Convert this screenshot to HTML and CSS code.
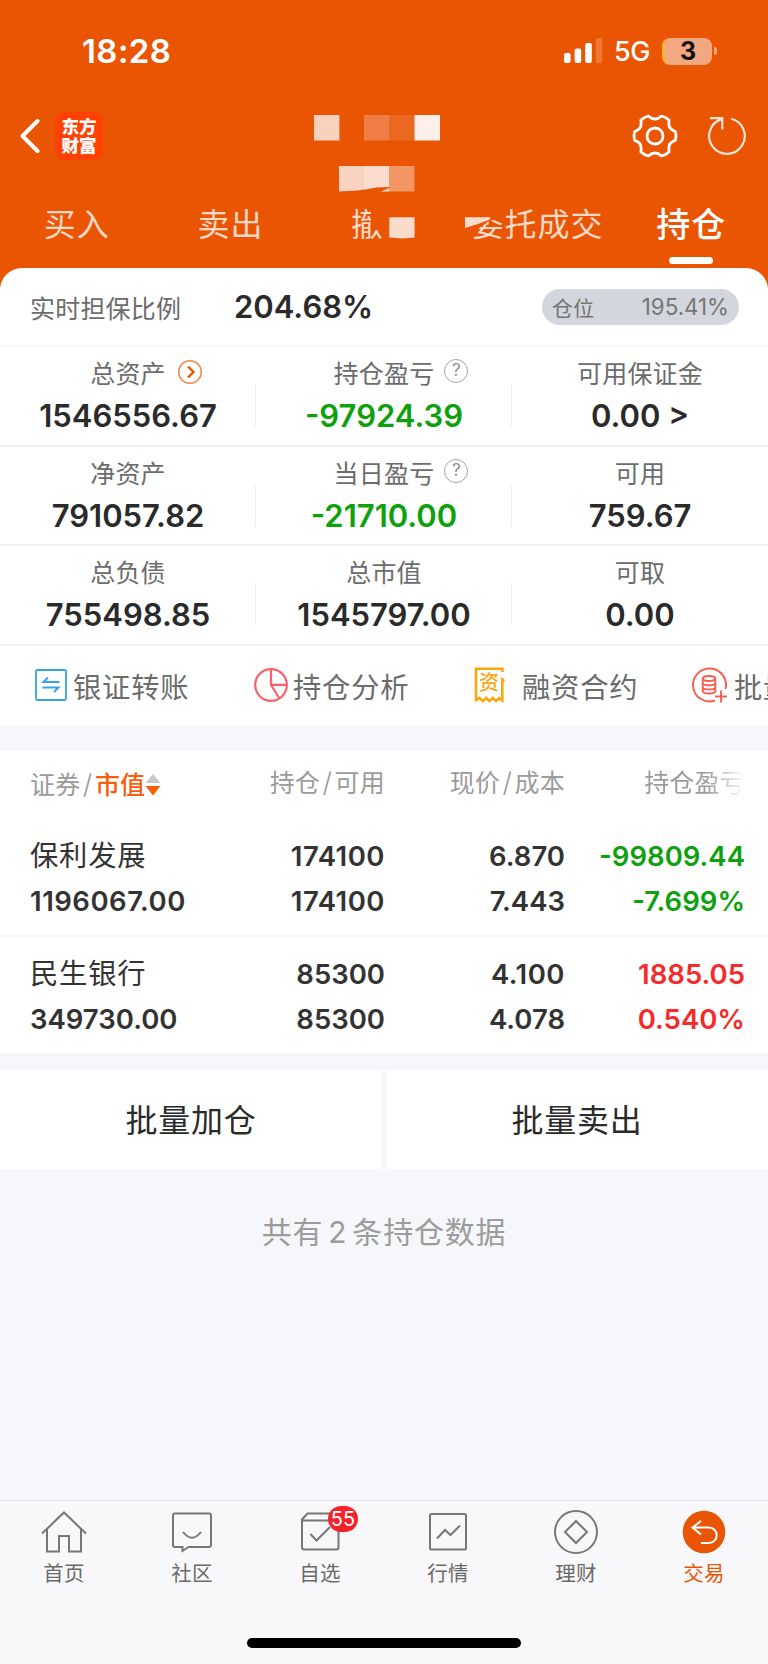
FILE: index.html
```html
<!DOCTYPE html>
<html lang="zh-CN">
<head>
<meta charset="utf-8">
<title>持仓</title>
<link rel="stylesheet" href="styles.css">
</head>
<body>
<div class="screen">
  <header class="header">
    <div class="status">
      <span class="time">18:28</span>
      <div class="status-right">
        <svg class="signal" width="40" height="28" viewBox="0 0 40 28"><g fill="#fff"><rect x="0" y="16" width="6.6" height="10" rx="2"/><rect x="10.6" y="11.500" width="6.600" height="14.500" rx="2"/><rect x="21.200" y="6" width="6.600" height="20" rx="2"/><rect x="31.800" y="1" width="6.600" height="25" rx="2" opacity=".2"/></g></svg>
        <span class="net">5G</span>
        <span class="battery">3</span>
        <span class="nub"></span>
      </div>
    </div>
    <div class="nav">
      <svg class="back" width="20" height="36" viewBox="0 0 20 36"><path d="M17.500 3 2.500 18l15 15" fill="none" stroke="#fff" stroke-width="4" stroke-linecap="round" stroke-linejoin="round"/></svg>
      <div class="logo"><span>东方</span><span>财富</span></div>
      <div class="nav-icons">
        <svg width="46" height="46" viewBox="-23 -23 46 46" fill="none" stroke="#fff" stroke-width="2.800" stroke-linejoin="round"><path d="M20.300 4.400Q12.200 7 14.200 15.800 11 19 6.600 20 0 14-6.600 20-11 19-14.200 15.800-12.200 7-20.300 4.400-21.600 0-20.300-4.400-12.200-7-14.200-15.800-11-19-6.600-20 0-14 6.600-20 11-19 14.200-15.800 12.200-7 20.300-4.400 21.600 0 20.300 4.400Z"/><circle r="8"/></svg>
        <svg width="42" height="42" viewBox="-21 -21 42 42" fill="none" stroke="#fde3d5" stroke-width="2.200"><path d="M4-17.300A17.800 17.800 0 1 1-5.500-16.900M-17-17.800H-4.700V-6.500"/></svg>
      </div>
    </div>
    <nav class="tabs">
      <span>买入</span><span>卖出</span><span>撤单</span><span>委托成交</span><span class="on">持仓</span>
    </nav>
    <svg class="mask" width="200" height="140" viewBox="314 110 200 140">
      <path fill="#f8d2bd" d="M314 115h25.400v25.500H314z"/><path fill="#ee7e45" d="M364 115h25.500v25.500H364z"/><path fill="#eb6820" d="M389.500 115h25v25.500h-25z"/><path fill="#fdf0ea" d="M414.500 115H440v25.500h-25.500z"/>
      <path fill="#f8d3bf" d="M339 166h25.500v23.500L358 190.500 339 191.500z"/><path fill="#fbdccd" d="M364 166h25.500v21L376 187.500 364 189.700z"/><path fill="#f29664" d="M389.500 166h25v25.500h-25z"/><path fill="#fbdccd" d="M381 191.500l8.500-3.500v3.500z"/>
      <path fill="#ea5504" d="M371 203h49v42h-38v-15h-11z"/><path fill="#f9dccb" d="M389.300 217.300h25.300V237.500l-12 1-13.300-1z"/>
      <path fill="#ea5504" d="M464 200h39v20h-13l-13 10h-13z"/><path fill="#f9dccb" d="M465 217.300h25.300v2L478 224 465 228z"/>
    </svg>
  </header>

  <main class="main">
    <section class="sheet">
      <div class="ratio">
        <span class="ratio-label">实时担保比例</span><strong class="ratio-value">204.68%</strong>
        <div class="pill"><span class="pill-label">仓位</span><span>195.41%</span></div>
      </div>
      <div class="stats">
        <div class="cell"><span class="label">总资产<svg class="tip" width="26" height="26" viewBox="-13 -13 26 26" fill="none"><circle r="11.300" stroke="#f2854b" stroke-width="1.500"/><path d="M-2-5.500 3.500 0-2 5.500" stroke="#ea5504" stroke-width="2.400"/></svg></span><b>1546556.67</b></div>
        <div class="cell"><span class="label">持仓盈亏<i class="tip help">?</i></span><b class="green">-97924.39</b></div>
        <div class="cell"><span class="label">可用保证金</span><b>0.00 &gt;</b></div>
        <div class="cell"><span class="label">净资产</span><b>791057.82</b></div>
        <div class="cell"><span class="label">当日盈亏<i class="tip help">?</i></span><b class="green">-21710.00</b></div>
        <div class="cell"><span class="label">可用</span><b>759.67</b></div>
        <div class="cell"><span class="label">总负债</span><b>755498.85</b></div>
        <div class="cell"><span class="label">总市值</span><b>1545797.00</b></div>
        <div class="cell"><span class="label">可取</span><b>0.00</b></div>
      </div>
      <div class="actions">
        <div class="action transfer"><svg width="32" height="34" viewBox="0 0 32 34" fill="none" stroke="#36a3f0"><rect x="1" y="2" width="30" height="30" rx="1.500" stroke-width="1.800"/><path d="M24.500 14H8.500l4.500-4.500M7.500 19.500H23.500L19 24" stroke-width="2"/></svg><span>银证转账</span></div>
        <div class="action analysis"><svg width="34" height="34" viewBox="0 0 34 34" fill="none" stroke="#fa6168" stroke-width="2.200"><circle cx="17" cy="17" r="15.800"/><path d="M17 1V16.800H32.500M17 16.800 25.500 30.500"/></svg><span>持仓分析</span></div>
        <div class="action contract"><div class="bill"><svg width="32" height="36" viewBox="0 0 32 36" fill="none" stroke="#fba50f" stroke-width="2.600"><path d="M28.500 5V1.800H2V33l3.500-2 3.300 3 3.300-3 3.300 3 3.300-3 3.300 3 3.300-3 3 2.500V11"/><path d="M26.500 9.500 31 13.500 28 17z" fill="#fba50f" stroke="none"/></svg><em>资</em></div><span>融资合约</span></div>
        <div class="action batch"><svg width="37" height="36" viewBox="0 0 37 36" fill="none" stroke="#fa5c50" stroke-width="1.900"><path d="M34.500 22A16.500 16.500 0 1 0 24 33.500M30 23.500V35.500M24 29.500H36"/><ellipse cx="18" cy="11.500" rx="6.300" ry="2.500"/><path d="M11.700 11.500V24q0 2.500 6.300 2.500T24.300 24V11.500M11.700 15.700q0 2.500 6.300 2.500t6.300-2.500M11.700 19.900q0 2.500 6.300 2.500t6.300-2.500"/></svg><span>批量</span></div>
      </div>
    </section>

    <section class="holdings">
      <div class="row head">
        <div class="sort"><span>证券</span><span class="slash">/</span><span class="orange">市值</span><svg width="16" height="22" viewBox="0 0 16 22"><path d="M8 0 15.500 9H.5z" fill="#c8c8c8"/><path d="M8 21.500 15.500 12H.5z" fill="#f4600c"/></svg></div>
        <div>持仓<span class="slash">/</span>可用</div><div>现价<span class="slash">/</span>成本</div><div class="fade">持仓盈亏</div>
      </div>
      <div class="row item">
        <div><span class="name">保利发展</span><b class="loose">1196067.00</b></div><div><b class="loose">174100</b><b class="loose">174100</b></div><div><b>6.870</b><b>7.443</b></div><div class="green"><b>-99809.44</b><b>-7.699%</b></div>
      </div>
      <div class="row item">
        <div><span class="name">民生银行</span><b>349730.00</b></div><div><b>85300</b><b>85300</b></div><div><b class="loose">4.100</b><b>4.078</b></div><div class="red"><b>1885.05</b><b>0.540%</b></div>
      </div>
    </section>
    <div class="buttons"><div>批量加仓</div><div>批量卖出</div></div>
    <p class="total">共有<span>2</span>条持仓数据</p>
  </main>

  <footer class="tabbar">
    <div class="dock">
      <div class="dock-item"><svg width="46" height="46" viewBox="-23 -23 46 46"><path d="M-22 1.500 0-19.500 22 1.500M-17-3V19.500H-5V4H5V19.500H17V-3"/></svg><span>首页</span></div>
      <div class="dock-item"><svg width="46" height="46" viewBox="-23 -23 46 46"><path d="M-17-18.500H17q2 0 2 2V13q0 2-2 2H-3.500L-9.500 19V15H-17q-2 0-2-2V-16.500q0-2 2-2ZM-9 0Q0 11.500 9 0"/></svg><span>社区</span></div>
      <div class="dock-item"><svg width="46" height="46" viewBox="-23 -23 46 46"><path d="M-18-12.500-12.500-18.500H18.500V15.500q0 2-2 2H-16q-2 0-2-2ZM-18-11.500H18.500M-9.500 2-3.500 8.500 10-5"/></svg><i class="badge">55</i><span>自选</span></div>
      <div class="dock-item"><svg width="46" height="46" viewBox="-23 -23 46 46"><rect x="-18" y="-18" width="36" height="35.500" rx="1.500"/><path d="M-11 6.500-3-2 2.500 3 12-6.500"/></svg><span>行情</span></div>
      <div class="dock-item"><svg width="46" height="46" viewBox="-23 -23 46 46"><circle r="21"/><path d="M0-11 11 0 0 11-11 0Z"/></svg><span>理财</span></div>
      <div class="dock-item active"><svg width="46" height="46" viewBox="-23 -23 46 46"><circle r="21.300" fill="#ea5504" stroke="none"/><path stroke="#fff" d="M-3-11-11.500-4.500-3 2.500M-11.500-4.500H5a7.700 7.700 0 0 1 0 15.400H-3"/></svg><span>交易</span></div>
    </div>
    <div class="home-bar"></div>
  </footer>
</div>
</body>
</html>
```
FILE: styles.css
```css
* { box-sizing: border-box; }
body { margin: 0; font-family: Inter, "Noto Sans CJK SC", sans-serif; color: #2a2a2a; background: #f6f7fa; }
svg { display: block; flex: none; }
i, em { font-style: normal; }
.screen { width: 768px; height: 1664px; display: flex; flex-direction: column; overflow: hidden; }

.header { position: relative; height: 288px; flex: none; background: #ea5504; color: #fff; }
.status { height: 102px; padding: 0 51px 0 82px; display: flex; justify-content: space-between; align-items: center; }
.time { font-size: 33px; font-weight: 600; line-height: 40px; letter-spacing: .4px; }
.status-right { display: flex; align-items: center; }
.net { width: 37px; margin: 2px 11px 0 10px; font-size: 27px; font-weight: 500; line-height: 32px; letter-spacing: -.5px; }
.battery { width: 50px; height: 27px; border-radius: 8px; border-left: 2px solid #fbb70c; background: #f3a881; color: #111; font-size: 25px; font-weight: 700; line-height: 27px; text-align: center; }
.nub { width: 3px; height: 8px; margin-left: 2px; border-radius: 0 4px 4px 0; background: #f3a881; }
.nav { height: 68px; padding: 0 20px; display: flex; align-items: center; }
.logo { width: 48px; height: 48px; margin-left: 15px; border-radius: 9px; background: #ff4203; display: flex; flex-direction: column; align-items: center; justify-content: center; font-size: 17.500px; font-weight: 900; line-height: 19px; }
.nav-icons { margin-left: auto; display: flex; align-items: center; gap: 28px; }
.tabs { height: 98px; display: grid; grid-template-columns: repeat(5, 1fr); text-align: center; font-size: 32px; line-height: 40px; letter-spacing: 1px; color: #fbd9c6; padding-top: 35px; }
.tabs .on { color: #fff; font-weight: 500; font-size: 34px; display: flex; flex-direction: column; align-items: center; }
.tabs .on::after { content: ""; width: 44px; height: 7px; margin-top: 12px; border-radius: 3.500px; background: #fff; }
.mask { position: absolute; left: 314px; top: 110px; }

.main { flex: 1; margin-top: -20px; position: relative; }
.sheet { height: 457px; background: #fff; border-radius: 22px 22px 0 0; overflow: hidden; }
.ratio { height: 79px; padding: 0 29px 0 30px; display: flex; align-items: center; border-bottom: 2px solid #f7f7f7; }
.ratio-label { width: 204px; font-size: 25px; letter-spacing: .2px; color: #6c6c6c; }
.ratio-value { font-size: 31px; font-weight: 600; }
.pill { width: 197px; height: 36px; margin-left: auto; padding: 0 10px 0 10px; border-radius: 18px; background: #d3d6dc; color: #757575; display: flex; justify-content: space-between; align-items: center; font-size: 22.300px; }
.pill-label { font-size: 21px; }
.stats { display: grid; grid-template-columns: repeat(3, 1fr); grid-auto-rows: 99.500px; }
.cell { display: flex; flex-direction: column; align-items: center; padding-top: 10px; border-bottom: 2px solid #f1f1f1; background: linear-gradient(#f0f0f0, #f0f0f0) no-repeat right 37px / 1.500px 43px; }
.cell:nth-child(3n) { background: none; }
.label { position: relative; font-size: 25px; line-height: 34px; letter-spacing: .2px; color: #6c6c6c; }
.label .tip { position: absolute; left: calc(100% + 11px); top: 2px; }
.label .help { left: calc(100% + 10px); width: 24px; height: 24px; border: 1.500px solid #a6a6a6; border-radius: 50%; font-size: 17px; line-height: 21px; text-align: center; color: #8c8c8c; }
.cell b { margin-top: 7px; font-size: 31px; font-weight: 600; line-height: 36px; }
.cell .green, .green { color: #0ea10e; }
.red { color: #f52a2a; }
.orange { color: #f4600c; font-weight: 500; }
.actions { height: 79px; padding-left: 35px; display: flex; align-items: center; font-size: 28.300px; color: #6c6c6c; letter-spacing: .8px; white-space: nowrap; }
.action { flex: none; display: flex; align-items: center; gap: 6px; }
.action.transfer { width: 219px; }
.action.analysis { width: 220px; gap: 5px; }
.action.contract { width: 217px; gap: 16px; }
.bill { position: relative; }
.bill em { position: absolute; left: 5px; top: 5px; font-size: 20px; line-height: 22px; letter-spacing: 0; font-weight: 500; color: #fba50f; }

.holdings { margin-top: 26px; background: #fff; }
.row { display: grid; grid-template-columns: 177px 178px 180px 180px; padding: 0 23px 0 30px; text-align: right; }
.row > :first-child { text-align: left; }
.head { height: 67.500px; line-height: 64px; font-size: 25px; letter-spacing: .2px; color: #9b9b9b; }
.sort { display: flex; align-items: center; white-space: nowrap; }
.slash { display: inline-block; width: 14.500px; text-align: center; font-weight: 300; font-size: 27px; }
.fade { -webkit-mask-image: linear-gradient(90deg, #000 78%, transparent 100%); }
.item { height: 118px; padding-top: 15.500px; font-size: 27.500px; color: #333; border-bottom: 2px solid #f6f6f6; }
.item b, .name { display: block; font-weight: 600; line-height: 45px; }
.item .loose { letter-spacing: .5px; }
.item .name { font-size: 28.300px; font-weight: 400; letter-spacing: .8px; }
.item .green { color: #0ea10e; }
.item .red { color: #f52a2a; }

.buttons { margin-top: 15.500px; display: grid; grid-template-columns: 1fr 1fr; gap: 4px; }
.buttons div { height: 99px; background: #fff; font-size: 32px; letter-spacing: .7px; line-height: 102px; text-align: center; }
.total { margin: 42px 0 0; text-align: center; font-size: 30px; line-height: 42px; letter-spacing: .8px; color: #9c9c9c; }
.total span { margin: 0 5px; }

.tabbar { height: 164px; flex: none; border-top: 1.500px solid #e5e5ec; background: #f8f8fb; display: flex; flex-direction: column; align-items: center; }
.dock { width: 100%; display: grid; grid-template-columns: repeat(6, 1fr); padding-top: 8px; }
.dock-item { position: relative; display: flex; flex-direction: column; align-items: center; gap: 4px; font-size: 20.500px; line-height: 30px; letter-spacing: .3px; color: #6a6a6a; }
.dock-item svg { fill: none; stroke: #777; stroke-width: 2; }
.dock-item.active { color: #ea5504; }
.badge { position: absolute; left: 72px; top: -3px; width: 30px; height: 26px; border-radius: 13px; background: #f5222a; color: #fff; font-size: 20px; line-height: 27px; text-align: center; letter-spacing: 0; }
.home-bar { width: 274px; height: 10px; margin-top: 49px; border-radius: 5px; background: #000; }
```
